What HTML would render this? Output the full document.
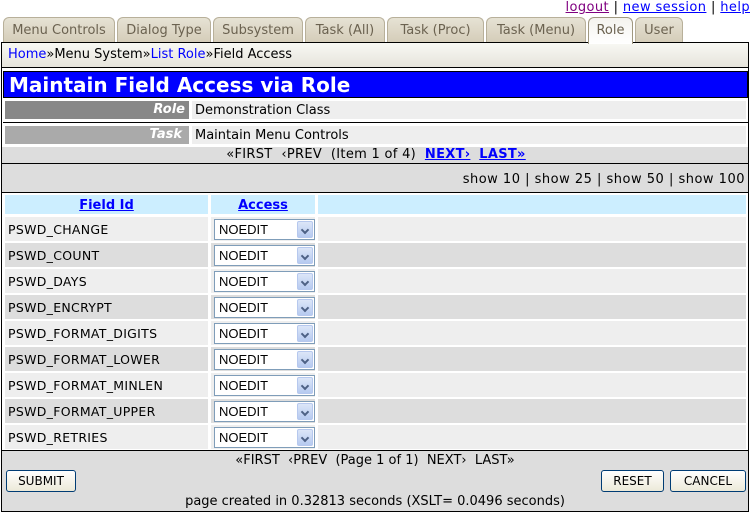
<!DOCTYPE html>
<html><head><style>
*{margin:0;padding:0;box-sizing:border-box}
body{width:752px;height:513px;background:#fff;position:relative;font-family:"DejaVu Sans",Verdana,sans-serif;font-size:13px;color:#000;overflow:hidden}
.a{position:absolute}
a{color:#00f}
.tab{position:absolute;top:17px;height:26px;background:linear-gradient(#e6e2d4,#d4ccb8);border:1px solid #b8b09a;border-bottom:none;border-radius:6px 6px 0 0;color:#6b6250;font-size:13px;text-align:center;line-height:25px}
.tab.on{background:linear-gradient(#f4f3ee,#fff);height:27px;z-index:3;border-color:#a09880}
.row{position:absolute;left:5px;width:741px;height:24px}
.c1{position:absolute;left:0;width:203px;height:24px;padding-left:3px;line-height:26px;font-size:12.5px;letter-spacing:0.3px}
.c2{position:absolute;left:206px;width:104px;height:24px}
.c3{position:absolute;left:313px;width:428px;height:24px}
.sel{position:absolute;left:3px;top:2px;width:101px;height:21px;border:1px solid #7f9db9;background:#fff;font-family:"Liberation Sans",Arial,sans-serif;font-size:13px;line-height:19px;padding-left:4px}
.sel i{position:absolute;right:1px;top:1px;width:16px;height:17px;background:linear-gradient(#dce6f8,#b6caf0);border:1px solid #b6c8ee;border-radius:2px}
.sel i:after{content:"";position:absolute;left:4px;top:5px;width:4px;height:4px;border-right:2px solid #4d6185;border-bottom:2px solid #4d6185;transform:rotate(45deg)}
.btn{position:absolute;top:470px;height:22px;border:1px solid #003c74;border-radius:3px;background:linear-gradient(#fff,#ece9d8);font-family:"DejaVu Sans",sans-serif;font-size:12px;text-align:center;line-height:20px}
</style></head><body>
<div class="a" style="right:2px;top:0;font-size:13px;line-height:15px;color:#000;letter-spacing:0.4px"><a style="color:#800080" href="#">logout</a> | <a href="#">new session</a> | <a href="#">help</a></div>

<div class="tab" style="left:3px;width:112px">Menu Controls</div>
<div class="tab" style="left:117px;width:94px">Dialog Type</div>
<div class="tab" style="left:213px;width:90px">Subsystem</div>
<div class="tab" style="left:305px;width:80px">Task (All)</div>
<div class="tab" style="left:387px;width:97px">Task (Proc)</div>
<div class="tab" style="left:486px;width:100px">Task (Menu)</div>
<div class="tab on" style="left:588px;width:45px">Role</div>
<div class="tab" style="left:635px;width:48px">User</div>

<div class="a" style="left:1px;top:42px;width:748px;height:470px;border:1px solid #000;background:#fff"></div>
<div class="a" style="left:2px;top:43px;width:746px;height:25px;background:linear-gradient(#f8f8f4,#e6e4dc);border-bottom:1px solid #000;padding-left:6px;line-height:24px;font-size:13px"><a href="#" style="text-decoration:none">Home</a>»Menu System»<a href="#" style="text-decoration:none">List Role</a>»Field Access</div>

<div class="a" style="left:3px;top:71px;width:745px;height:27px;background:#00f;border:1px solid #000;color:#fff;font-weight:bold;font-size:20px;line-height:26px;padding-left:5px">Maintain Field Access via Role</div>

<div class="a" style="left:5px;top:101px;width:184px;height:18px;background:#888;color:#fff;font-style:italic;font-weight:bold;text-align:right;padding-right:4px;line-height:18px;font-size:13px">Role</div>
<div class="a" style="left:192px;top:101px;width:554px;height:18px;background:#eee;padding-left:3px;line-height:19px;font-size:13px">Demonstration Class</div>
<div class="a" style="left:3px;top:122px;width:745px;height:1px;background:#000"></div>
<div class="a" style="left:5px;top:126px;width:184px;height:18px;background:#aaa;color:#fff;font-style:italic;font-weight:bold;text-align:right;padding-right:7px;line-height:18px;font-size:13px">Task</div>
<div class="a" style="left:192px;top:126px;width:554px;height:18px;background:#eee;padding-left:3px;line-height:19px;font-size:13px">Maintain Menu Controls</div>

<div class="a" style="left:2px;top:147px;width:746px;height:16px;background:#ddd;text-align:center;line-height:16px;padding-left:2px;letter-spacing:0.3px">«FIRST&nbsp; ‹PREV&nbsp; (Item 1 of 4)&nbsp; <a href="#" style="font-weight:bold">NEXT›</a>&nbsp; <a href="#" style="font-weight:bold">LAST»</a></div>
<div class="a" style="left:2px;top:163px;width:746px;height:1px;background:#000"></div>
<div class="a" style="left:2px;top:164px;width:746px;height:28px;background:#ddd;text-align:right;padding-right:3px;line-height:31px;letter-spacing:0.5px">show 10 | show 25 | show 50 | show 100</div>
<div class="a" style="left:2px;top:192px;width:746px;height:1px;background:#000"></div>

<div class="row" style="top:195px;height:19px">
<div class="c1" style="height:19px;background:#cef;text-align:center;padding:0;line-height:21px;font-size:13px;letter-spacing:0"><a href="#" style="font-weight:bold">Field Id</a></div>
<div class="c2" style="height:19px;background:#cef;text-align:center;line-height:21px"><a href="#" style="font-weight:bold">Access</a></div>
<div class="c3" style="height:19px;background:#cef"></div>
</div>

<div class="row" style="top:217px"><div class="c1" style="background:#eee">PSWD_CHANGE</div><div class="c2" style="background:#eee"><div class="sel">NOEDIT<i></i></div></div><div class="c3" style="background:#eee"></div></div>
<div class="row" style="top:243px"><div class="c1" style="background:#ddd">PSWD_COUNT</div><div class="c2" style="background:#ddd"><div class="sel">NOEDIT<i></i></div></div><div class="c3" style="background:#ddd"></div></div>
<div class="row" style="top:269px"><div class="c1" style="background:#eee">PSWD_DAYS</div><div class="c2" style="background:#eee"><div class="sel">NOEDIT<i></i></div></div><div class="c3" style="background:#eee"></div></div>
<div class="row" style="top:295px"><div class="c1" style="background:#ddd">PSWD_ENCRYPT</div><div class="c2" style="background:#ddd"><div class="sel">NOEDIT<i></i></div></div><div class="c3" style="background:#ddd"></div></div>
<div class="row" style="top:321px"><div class="c1" style="background:#eee">PSWD_FORMAT_DIGITS</div><div class="c2" style="background:#eee"><div class="sel">NOEDIT<i></i></div></div><div class="c3" style="background:#eee"></div></div>
<div class="row" style="top:347px"><div class="c1" style="background:#ddd">PSWD_FORMAT_LOWER</div><div class="c2" style="background:#ddd"><div class="sel">NOEDIT<i></i></div></div><div class="c3" style="background:#ddd"></div></div>
<div class="row" style="top:373px"><div class="c1" style="background:#eee">PSWD_FORMAT_MINLEN</div><div class="c2" style="background:#eee"><div class="sel">NOEDIT<i></i></div></div><div class="c3" style="background:#eee"></div></div>
<div class="row" style="top:399px"><div class="c1" style="background:#ddd">PSWD_FORMAT_UPPER</div><div class="c2" style="background:#ddd"><div class="sel">NOEDIT<i></i></div></div><div class="c3" style="background:#ddd"></div></div>
<div class="row" style="top:425px"><div class="c1" style="background:#eee">PSWD_RETRIES</div><div class="c2" style="background:#eee"><div class="sel">NOEDIT<i></i></div></div><div class="c3" style="background:#eee"></div></div>

<div class="a" style="left:2px;top:450px;width:746px;height:1px;background:#000"></div>
<div class="a" style="left:2px;top:451px;width:746px;height:60px;background:#ddd"></div>
<div class="a" style="left:2px;top:452px;width:746px;height:17px;text-align:center;line-height:17px;font-size:13px">«FIRST&nbsp; ‹PREV&nbsp; (Page 1 of 1)&nbsp; NEXT›&nbsp; LAST»</div>
<div class="btn" style="left:6px;width:70px">SUBMIT</div>
<div class="btn" style="left:601px;width:63px">RESET</div>
<div class="btn" style="left:670px;width:76px">CANCEL</div>
<div class="a" style="left:2px;top:493px;width:746px;height:17px;text-align:center;line-height:17px;font-size:13px">page created in 0.32813 seconds (XSLT= 0.0496 seconds)</div>
</body></html>
